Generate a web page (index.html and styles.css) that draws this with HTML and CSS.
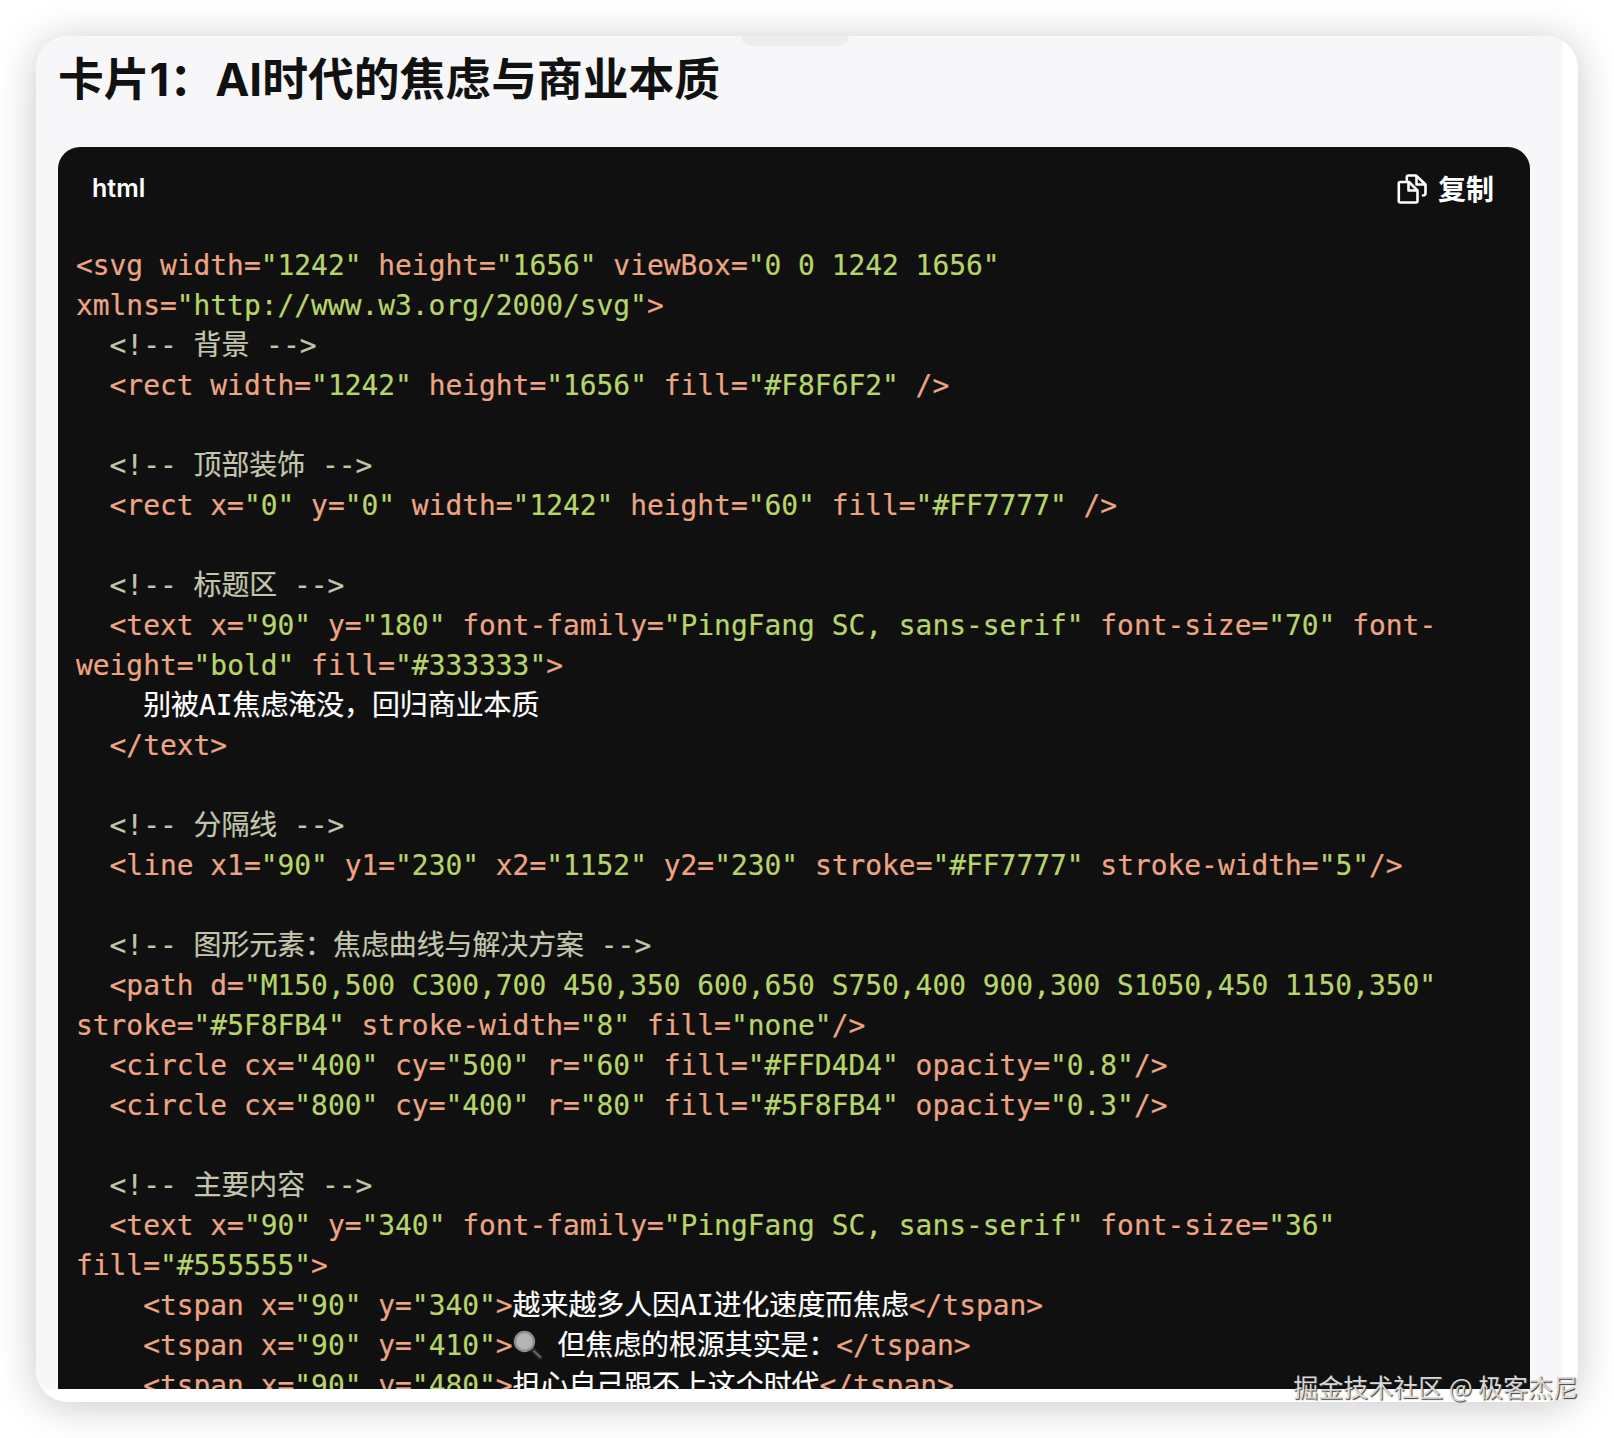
FILE: index.html
```html
<!DOCTYPE html>
<html lang="zh-CN">
<head>
<meta charset="utf-8">
<title>卡片1</title>
<link rel="stylesheet" href="styles.css">
</head>
<body>
<main class="card">
  <div class="clip">
    <div class="notch"></div>
    <div class="inner">
      <h1 class="title">卡片1：AI时代的焦虑与商业本质</h1>
      <section class="code">
        <header class="code-head">
          <span class="lang">html</span>
          <span class="copy">
            <svg class="copy-icon" viewBox="0 0 30 32" fill="none" stroke="#fff" stroke-width="2.6" stroke-linejoin="round" stroke-linecap="round">
              <path d="M12 10H3.300A1.500 1.500 0 0 0 1.800 11.500V29A1.500 1.500 0 0 0 3.300 30.500H19A1.500 1.500 0 0 0 20.500 29V18.500L12 10"/>
              <path d="M11.500 11v7.500H20"/>
              <path d="M9.800 8V5A1.500 1.500 0 0 1 11.300 3.500H19L28.500 12.500V21Q28.500 23.500 26 23.500"/>
              <path d="M19.500 4.500V12.500H27.500"/>
            </svg>
            复制
          </span>
        </header>
        <div class="lines">
          <div class="l"><span class="t">&lt;svg width=</span><span class="s">"1242"</span><span class="t"> height=</span><span class="s">"1656"</span><span class="t"> viewBox=</span><span class="s">"0 0 1242 1656"</span></div>
          <div class="l"><span class="t">xmlns=</span><span class="s">"http://www.w3.org/2000/svg"</span><span class="t">&gt;</span></div>
          <div class="l"><span class="c">  &lt;!-- 背景 --&gt;</span></div>
          <div class="l"><span class="t">  &lt;rect width=</span><span class="s">"1242"</span><span class="t"> height=</span><span class="s">"1656"</span><span class="t"> fill=</span><span class="s">"#F8F6F2"</span><span class="t"> /&gt;</span></div>
          <div class="l"></div>
          <div class="l"><span class="c">  &lt;!-- 顶部装饰 --&gt;</span></div>
          <div class="l"><span class="t">  &lt;rect x=</span><span class="s">"0"</span><span class="t"> y=</span><span class="s">"0"</span><span class="t"> width=</span><span class="s">"1242"</span><span class="t"> height=</span><span class="s">"60"</span><span class="t"> fill=</span><span class="s">"#FF7777"</span><span class="t"> /&gt;</span></div>
          <div class="l"></div>
          <div class="l"><span class="c">  &lt;!-- 标题区 --&gt;</span></div>
          <div class="l"><span class="t">  &lt;text x=</span><span class="s">"90"</span><span class="t"> y=</span><span class="s">"180"</span><span class="t"> font-family=</span><span class="s">"PingFang SC, sans-serif"</span><span class="t"> font-size=</span><span class="s">"70"</span><span class="t"> font-</span></div>
          <div class="l"><span class="t">weight=</span><span class="s">"bold"</span><span class="t"> fill=</span><span class="s">"#333333"</span><span class="t">&gt;</span></div>
          <div class="l"><span class="w">    别被AI焦虑淹没，回归商业本质</span></div>
          <div class="l"><span class="t">  &lt;/text&gt;</span></div>
          <div class="l"></div>
          <div class="l"><span class="c">  &lt;!-- 分隔线 --&gt;</span></div>
          <div class="l"><span class="t">  &lt;line x1=</span><span class="s">"90"</span><span class="t"> y1=</span><span class="s">"230"</span><span class="t"> x2=</span><span class="s">"1152"</span><span class="t"> y2=</span><span class="s">"230"</span><span class="t"> stroke=</span><span class="s">"#FF7777"</span><span class="t"> stroke-width=</span><span class="s">"5"</span><span class="t">/&gt;</span></div>
          <div class="l"></div>
          <div class="l"><span class="c">  &lt;!-- 图形元素：焦虑曲线与解决方案 --&gt;</span></div>
          <div class="l"><span class="t">  &lt;path d=</span><span class="s">"M150,500 C300,700 450,350 600,650 S750,400 900,300 S1050,450 1150,350"</span></div>
          <div class="l"><span class="t">stroke=</span><span class="s">"#5F8FB4"</span><span class="t"> stroke-width=</span><span class="s">"8"</span><span class="t"> fill=</span><span class="s">"none"</span><span class="t">/&gt;</span></div>
          <div class="l"><span class="t">  &lt;circle cx=</span><span class="s">"400"</span><span class="t"> cy=</span><span class="s">"500"</span><span class="t"> r=</span><span class="s">"60"</span><span class="t"> fill=</span><span class="s">"#FFD4D4"</span><span class="t"> opacity=</span><span class="s">"0.8"</span><span class="t">/&gt;</span></div>
          <div class="l"><span class="t">  &lt;circle cx=</span><span class="s">"800"</span><span class="t"> cy=</span><span class="s">"400"</span><span class="t"> r=</span><span class="s">"80"</span><span class="t"> fill=</span><span class="s">"#5F8FB4"</span><span class="t"> opacity=</span><span class="s">"0.3"</span><span class="t">/&gt;</span></div>
          <div class="l"></div>
          <div class="l"><span class="c">  &lt;!-- 主要内容 --&gt;</span></div>
          <div class="l"><span class="t">  &lt;text x=</span><span class="s">"90"</span><span class="t"> y=</span><span class="s">"340"</span><span class="t"> font-family=</span><span class="s">"PingFang SC, sans-serif"</span><span class="t"> font-size=</span><span class="s">"36"</span></div>
          <div class="l"><span class="t">fill=</span><span class="s">"#555555"</span><span class="t">&gt;</span></div>
          <div class="l"><span class="t">    &lt;tspan x=</span><span class="s">"90"</span><span class="t"> y=</span><span class="s">"340"</span><span class="t">&gt;</span><span class="w">越来越多人因AI进化速度而焦虑</span><span class="t">&lt;/tspan&gt;</span></div>
          <div class="l"><span class="t">    &lt;tspan x=</span><span class="s">"90"</span><span class="t"> y=</span><span class="s">"410"</span><span class="t">&gt;</span><svg class="glass" viewBox="0 0 30 30"><path d="M19 19l8 8" stroke="#2a2a2a" stroke-width="5" stroke-linecap="round"/><path d="M21 21l6 6" stroke="#777" stroke-width="1.500" stroke-linecap="round"/><circle cx="11.500" cy="11.500" r="9.500" fill="#b4b4b6" stroke="#8d8d8f" stroke-width="2.400"/></svg><span class="w"> 但焦虑的根源其实是：</span><span class="t">&lt;/tspan&gt;</span></div>
          <div class="l"><span class="t">    &lt;tspan x=</span><span class="s">"90"</span><span class="t"> y=</span><span class="s">"480"</span><span class="t">&gt;</span><span class="w">担心自己跟不上这个时代</span><span class="t">&lt;/tspan&gt;</span></div>
        </div>
      </section>
    </div>
  </div>
  <div class="watermark">掘金技术社区 @ 极客杰尼</div>
</main>
</body>
</html>
```
FILE: styles.css
```css
* { box-sizing: border-box; }
html, body { margin: 0; background: #fff; }
body { width: 1614px; height: 1438px; padding: 36px; overflow: hidden; }
.card {
  position: relative;
  width: 1542px;
  height: 1366px;
  border-radius: 32px;
  background: #fff;
  box-shadow: 0 4px 40px rgba(0, 0, 0, .22);
}
.clip {
  position: relative;
  height: 100%;
  border-radius: 32px;
  overflow: hidden;
}
.inner {
  width: 1526px;
  height: 1353px;
  padding: 0 32px 0 22px;
  background: #f7f7f9;
  display: flex;
  flex-direction: column;
  overflow: hidden;
}
.notch {
  position: absolute;
  left: 705px;
  top: 0;
  width: 108px;
  height: 10px;
  border-radius: 0 0 14px 14px;
  background: #ededef;
}
.title {
  margin: 0;
  height: 111px;
  font: 700 45.8px/87px "Inter", "Noto Sans CJK SC", sans-serif;
  color: #111;
  white-space: nowrap;
}
.code {
  flex: 1;
  min-height: 0;
  border-radius: 22px 22px 0 0;
  background: #101011;
  overflow: hidden;
}
.code-head {
  height: 78px;
  padding: 3px 36px 0 34px;
  display: flex;
  align-items: center;
  justify-content: space-between;
  color: #fff;
}
.lang { font: 600 25px/30px "Inter", "Noto Sans", sans-serif; padding-top: 1px; }
.copy {
  display: flex;
  align-items: center;
  gap: 11px;
  font: 700 28px/34px "Noto Sans CJK SC", sans-serif;
}
.copy-icon { width: 30px; height: 32px; }
.lines {
  padding: 21px 0 0 18px;
  font: 400 27.9px/40px "DejaVu Sans Mono", "Noto Sans CJK SC", monospace;
  -webkit-text-stroke: .2px;
}
.l { height: 40px; white-space: pre; overflow: hidden; }
.t { color: #eda583; }
.s { color: #b7d668; }
.c { color: #c3c6ad; }
.w { color: #fff; }
.glass { width: 30px; height: 30px; vertical-align: -5px; margin-right: -2px; }
.watermark {
  position: absolute;
  right: 0;
  bottom: 2px;
  font: 400 25px/28px "Noto Sans CJK SC", sans-serif;
  color: #d8d8d8;
  text-shadow: 1px 1px 1px #3a3a3a;
  white-space: nowrap;
}
```
